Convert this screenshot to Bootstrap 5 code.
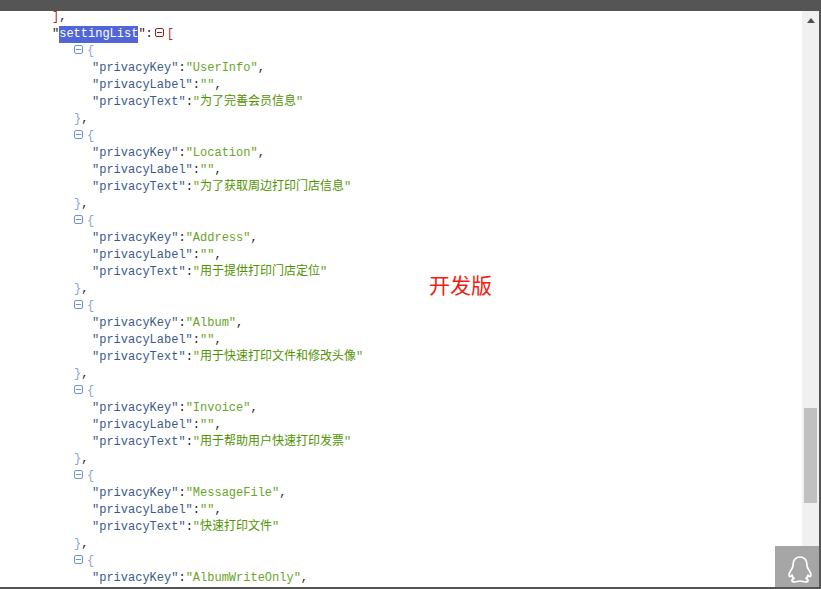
<!DOCTYPE html>
<html lang="zh"><head><meta charset="utf-8"><title>JSON</title>
<link href="https://cdn.jsdelivr.net/npm/bootstrap@5.3.0/dist/css/bootstrap.min.css" rel="stylesheet">
<style>
html,body{height:100%;overflow:hidden;background:#fff}
.shell{height:589px;border-right:2px solid #555;border-bottom:2px solid #555;position:relative}
.topbar{height:11px;background:#555;flex:none}
.pane{overflow:hidden;font:12px/17px "Liberation Mono","Noto Sans CJK SC",monospace;color:#3b5a8c;white-space:nowrap}
.ln{height:17px}
.ln:first-child{margin-top:-2px}
.l1{padding-left:52px}.l2{padding-left:74px}.l3{padding-left:92px}
.pn{color:#222}.s{color:#6aa52a}.z{font-family:"Noto Sans CJK SC",sans-serif;color:#4f9400;line-height:1;vertical-align:baseline}
.bl{color:#8aa5d0}.rd{color:#a83232}
.tg{display:inline-block;width:9px;height:9px;border:1px solid #6f93cf;border-radius:2px;position:relative;margin-right:4px;vertical-align:0}
.tg::after{content:"";position:absolute;left:1px;right:1px;top:3px;height:1px;background:#6f93cf}
.tg.red{border-color:#a01c1c;margin-left:2px;margin-right:3px}.tg.red::after{background:#a01c1c}
.sel{background:#5166d6;color:#fff;display:inline-block;height:17px}
.sbar{width:17px;background:#f0f0f0;flex:none}
.arr{width:0;height:0;border:4px solid transparent;border-bottom:5px solid #505050;border-top:0;margin:7px auto 0}
.thumb{width:13px;height:95px;background:#c0c0c0;margin:385px auto 0}
.dev{position:absolute;left:429px;top:269px;font:21px/30px "Noto Sans CJK SC",sans-serif;color:#f01c10}
.qq{position:absolute;right:0;bottom:0;width:44px;height:41px;background:#a6a6a6}
</style></head><body>
<div class="shell d-flex flex-column">
<div class="topbar"></div>
<div class="d-flex flex-grow-1 overflow-hidden">
<div class="pane flex-grow-1" id="p">
<div class="ln l1"><span class="rd">]</span><span class="pn">,</span></div>
<div class="ln l1"><span class="pn">"</span><span class="sel">settingList</span><span class="pn">":</span><span class="tg red"></span><span class="rd">[</span></div>
<div class="ln l2"><span class="tg"></span><span class="bl">{</span></div>
<div class="ln l3">"privacyKey"<span class="pn">:</span><span class="s">"UserInfo"</span><span class="pn">,</span></div>
<div class="ln l3">"privacyLabel"<span class="pn">:</span><span class="s">""</span><span class="pn">,</span></div>
<div class="ln l3">"privacyText"<span class="pn">:</span><span class="s">"<span class="z">为了完善会员信息</span>"</span></div>
<div class="ln l2"><span class="bl">}</span><span class="pn">,</span></div>
<div class="ln l2"><span class="tg"></span><span class="bl">{</span></div>
<div class="ln l3">"privacyKey"<span class="pn">:</span><span class="s">"Location"</span><span class="pn">,</span></div>
<div class="ln l3">"privacyLabel"<span class="pn">:</span><span class="s">""</span><span class="pn">,</span></div>
<div class="ln l3">"privacyText"<span class="pn">:</span><span class="s">"<span class="z">为了获取周边打印门店信息</span>"</span></div>
<div class="ln l2"><span class="bl">}</span><span class="pn">,</span></div>
<div class="ln l2"><span class="tg"></span><span class="bl">{</span></div>
<div class="ln l3">"privacyKey"<span class="pn">:</span><span class="s">"Address"</span><span class="pn">,</span></div>
<div class="ln l3">"privacyLabel"<span class="pn">:</span><span class="s">""</span><span class="pn">,</span></div>
<div class="ln l3">"privacyText"<span class="pn">:</span><span class="s">"<span class="z">用于提供打印门店定位</span>"</span></div>
<div class="ln l2"><span class="bl">}</span><span class="pn">,</span></div>
<div class="ln l2"><span class="tg"></span><span class="bl">{</span></div>
<div class="ln l3">"privacyKey"<span class="pn">:</span><span class="s">"Album"</span><span class="pn">,</span></div>
<div class="ln l3">"privacyLabel"<span class="pn">:</span><span class="s">""</span><span class="pn">,</span></div>
<div class="ln l3">"privacyText"<span class="pn">:</span><span class="s">"<span class="z">用于快速打印文件和修改头像</span>"</span></div>
<div class="ln l2"><span class="bl">}</span><span class="pn">,</span></div>
<div class="ln l2"><span class="tg"></span><span class="bl">{</span></div>
<div class="ln l3">"privacyKey"<span class="pn">:</span><span class="s">"Invoice"</span><span class="pn">,</span></div>
<div class="ln l3">"privacyLabel"<span class="pn">:</span><span class="s">""</span><span class="pn">,</span></div>
<div class="ln l3">"privacyText"<span class="pn">:</span><span class="s">"<span class="z">用于帮助用户快速打印发票</span>"</span></div>
<div class="ln l2"><span class="bl">}</span><span class="pn">,</span></div>
<div class="ln l2"><span class="tg"></span><span class="bl">{</span></div>
<div class="ln l3">"privacyKey"<span class="pn">:</span><span class="s">"MessageFile"</span><span class="pn">,</span></div>
<div class="ln l3">"privacyLabel"<span class="pn">:</span><span class="s">""</span><span class="pn">,</span></div>
<div class="ln l3">"privacyText"<span class="pn">:</span><span class="s">"<span class="z">快速打印文件</span>"</span></div>
<div class="ln l2"><span class="bl">}</span><span class="pn">,</span></div>
<div class="ln l2"><span class="tg"></span><span class="bl">{</span></div>
<div class="ln l3">"privacyKey"<span class="pn">:</span><span class="s">"AlbumWriteOnly"</span><span class="pn">,</span></div>
</div>
<div class="sbar"><div class="arr"></div><div class="thumb"></div></div>
</div>
<div class="dev">开发版</div>
<div class="qq d-flex align-items-center justify-content-center">
<svg width="28" height="32" viewBox="0 0 28 32" fill="none" stroke="#fff" stroke-width="1.7" stroke-linejoin="round" style="margin:6px 0 0 6px"><path d="M14 3C9 3 7 7 7 11.5c0 2-1 3-2.5 5.500C3 19.500 2.500 22 4 22.500c.8.2 1.500-.7 2-1.500.3 1.500 1 2.700 2 3.500-1.500.7-2.500 1.500-2 2.500.5 1 3 1 5 .5 1-.3 2-.5 3-.5s2 .2 3 .5c2 .5 4.500.5 5-.5s-.5-1.800-2-2.500c1-.8 1.700-2 2-3.500.5.800 1.200 1.700 2 1.500 1.500-.5 1-3-.5-5.500C22 14.500 21 13.500 21 11.500 21 7 19 3 14 3Z"/></svg>
</div>
</div>
<script src="https://cdn.jsdelivr.net/npm/bootstrap@5.3.0/dist/js/bootstrap.bundle.min.js"></script>
</body></html>
